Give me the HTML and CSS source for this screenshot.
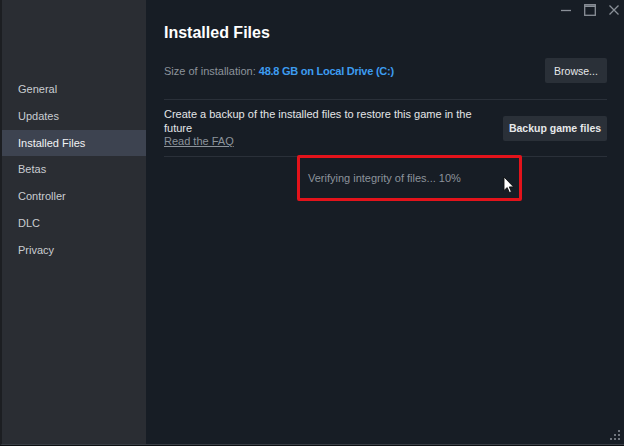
FILE: index.html
```html
<!DOCTYPE html>
<html>
<head>
<meta charset="utf-8">
<link rel="stylesheet" href="styles.css">
</head>
<body>
<div class="window">
  <aside class="sidebar">
    <nav class="nav">
      <div class="nav-item">General</div>
      <div class="nav-item">Updates</div>
      <div class="nav-item active">Installed Files</div>
      <div class="nav-item">Betas</div>
      <div class="nav-item">Controller</div>
      <div class="nav-item">DLC</div>
      <div class="nav-item">Privacy</div>
    </nav>
  </aside>
  <main class="main">
    <div class="titlebar">
      <svg class="ctl" width="12" height="12" viewBox="0 0 12 12"><path d="M1 6.5H11" stroke="#8a9098" stroke-width="1.3"/></svg>
      <svg class="ctl" width="12" height="12" viewBox="0 0 12 12"><rect x="0.7" y="0.7" width="10.6" height="10.6" fill="none" stroke="#8a9098" stroke-width="1.3"/><path d="M0.7 2.2H11.3" stroke="#8a9098" stroke-width="1.6"/></svg>
      <svg class="ctl" width="12" height="12" viewBox="0 0 12 12"><path d="M1.5 1.5L10.5 10.5M10.5 1.5L1.5 10.5" stroke="#8a9098" stroke-width="1.3"/></svg>
    </div>
    <div class="content">
      <h1 class="title">Installed Files</h1>
      <div class="row row-size">
        <div class="size-text">Size of installation: <span class="size-val">48.8 GB on Local Drive (C:)</span></div>
        <button class="btn btn-browse">Browse...</button>
      </div>
      <div class="row row-backup">
        <div class="backup-text">
          <div>Create a backup of the installed files to restore this game in the future</div>
          <a class="faq">Read the FAQ</a>
        </div>
        <button class="btn btn-backup">Backup game files</button>
      </div>
      <div class="verify-row">
        <div class="highlight">Verifying integrity of files... 10%</div>
      </div>
    </div>
    <svg class="cursor" width="12" height="18" viewBox="0 0 12 18"><path d="M1 1V14.5L4.2 11.6L6.4 16.6L8.4 15.7L6.3 10.9H10.6Z" fill="#ffffff" stroke="#111" stroke-width="0.9" stroke-linejoin="round"/></svg>
    <svg class="grip" width="12" height="12" viewBox="0 0 12 12" fill="#6f757d"><rect x="8" y="0" width="2" height="2"/><rect x="4" y="4" width="2" height="2"/><rect x="8" y="4" width="2" height="2"/><rect x="0" y="8" width="2" height="2"/><rect x="4" y="8" width="2" height="2"/><rect x="8" y="8" width="2" height="2"/></svg>
  </main>
</div>
</body>
</html>
```
FILE: styles.css
```css
* { box-sizing: border-box; }
html, body { margin: 0; padding: 0; }
body {
  width: 624px;
  height: 446px;
  background: #0d0f12;
  font-family: "Liberation Sans", Arial, sans-serif;
  overflow: hidden;
}
.window {
  display: flex;
  height: 445px;
  border-bottom: 1px solid #3a3f46;
  border-left: 2px solid #1c1e22;
}
.sidebar {
  width: 144px;
  background: #2a2d33;
  padding-top: 76px;
}
.nav-item {
  height: 26.8px;
  line-height: 26.8px;
  padding-left: 16px;
  font-size: 11px;
  color: #c9ccd1;
}
.nav-item.active {
  background: #3d4350;
  color: #f2f3f5;
}
.main {
  flex: 1;
  position: relative;
  background: #171d25;
}
.titlebar {
  display: flex;
  justify-content: flex-end;
  align-items: center;
  gap: 12px;
  height: 20px;
  padding: 0 4px 0 0;
}
.ctl { display: block; }
.content {
  padding: 0 17px 0 18px;
}
.title {
  margin: 2px 0 0;
  font-size: 16px;
  font-weight: bold;
  color: #ffffff;
  line-height: 22px;
}
.row {
  display: flex;
  justify-content: space-between;
  align-items: center;
  border-bottom: 1px solid #2a3039;
}
.row-size {
  margin-top: 14px;
  padding-bottom: 16px;
}
.size-text {
  font-size: 11px;
  color: #8c939b;
}
.size-val {
  color: #3d9cf0;
  font-weight: bold;
  letter-spacing: -0.25px;
}
.btn {
  border: none;
  background: #2a3038;
  color: #e6e8ea;
  font-family: inherit;
  font-size: 10.5px;
  border-radius: 2px;
  height: 25px;
  padding: 0;
}
.btn-browse { width: 62px; }
.btn-backup { width: 104px; font-weight: bold; font-size: 10.5px; }
.row-backup {
  padding-top: 8px;
  padding-bottom: 7px;
}
.backup-text {
  width: 320px;
  font-size: 11px;
  line-height: 13.5px;
  color: #e4e6e8;
}
.faq {
  display: block;
  color: #8c939b;
  text-decoration: underline;
}
.verify-row {
  padding-left: 133px;
}
.highlight {
  width: 225px;
  height: 46px;
  margin-top: -2px;
  border: 3px solid #e3131b;
  border-radius: 2px;
  padding-left: 8px;
  display: flex;
  align-items: center;
  font-size: 11px;
  color: #8c939b;
}
.cursor {
  position: absolute;
  left: 357px;
  top: 176px;
}
.grip {
  position: absolute;
  right: 2px;
  bottom: 2px;
}
```
